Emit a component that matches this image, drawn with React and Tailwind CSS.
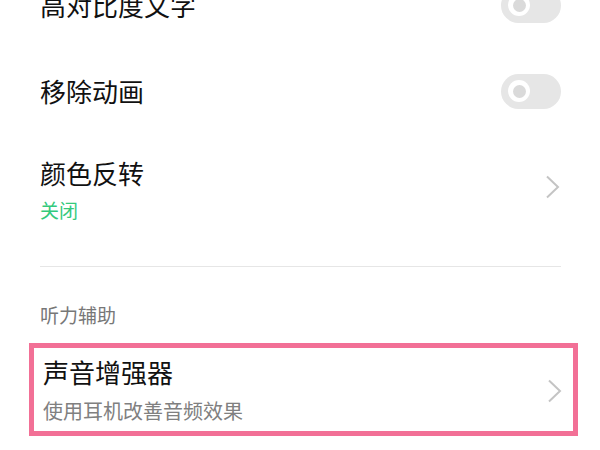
import React from 'react';

const font = { fontFamily: '"Noto Sans CJK SC", "Noto Sans", sans-serif' };

const Toggle = () => (
  <div className="w-[60px] h-[35px] rounded-full bg-[#e6e6e6] flex items-center pl-[7px] shrink-0">
    <div className="w-[22px] h-[22px] rounded-full bg-white flex items-center justify-center">
      <div className="w-[13px] h-[13px] rounded-full bg-[#dadada]" />
    </div>
  </div>
);

const Chevron = () => (
  <svg width="15" height="24" viewBox="0 0 15 24" className="shrink-0">
    <path d="M2 1.5 L13 12 L2 22.5" fill="none" stroke="#c4c4c4" strokeWidth="2" />
  </svg>
);

const SwitchRow = ({ title, className = '' }) => (
  <div className={`h-[86px] flex items-center justify-between ${className}`}>
    <span className="text-[26px] leading-[34px] text-[#111]">{title}</span>
    <Toggle />
  </div>
);

export default function App() {
  return (
    <div className="w-[600px] h-[450px] overflow-hidden bg-white" style={font}>
      <div className="pl-10 pr-[39px]">
        <SwitchRow title="高对比度文字" className="-mt-[38px]" />
        <SwitchRow title="移除动画" />

        {/* 颜色反转 */}
        <div className="pt-[22px] pb-[43px] flex items-center justify-between">
          <div className="flex flex-col">
            <span className="text-[26px] leading-[34px] text-[#111]">颜色反转</span>
            <span className="mt-[7px] text-[19px] leading-[26px] text-[#34c97c]">关闭</span>
          </div>
          <div className="pr-px pb-[6px]">
            <Chevron />
          </div>
        </div>

        <div className="h-px bg-[#e6e6e6]" />

        <div className="pt-[35px] pb-[15px] text-[19px] leading-[26px] text-[#777]">听力辅助</div>

        {/* 声音增强器 */}
        <div className="-ml-[11px] -mr-[17px] border-[5px] border-[#f27096] pl-[9px] pr-[11px] h-[93px] flex items-center justify-between">
          <div className="flex flex-col">
            <span className="text-[26px] leading-[34px] text-[#111]">声音增强器</span>
            <span className="mt-[9px] text-[20px] leading-[26px] text-[#808080]">使用耳机改善音频效果</span>
          </div>
          <div className="pt-[2px]">
            <Chevron />
          </div>
        </div>
      </div>
    </div>
  );
}
